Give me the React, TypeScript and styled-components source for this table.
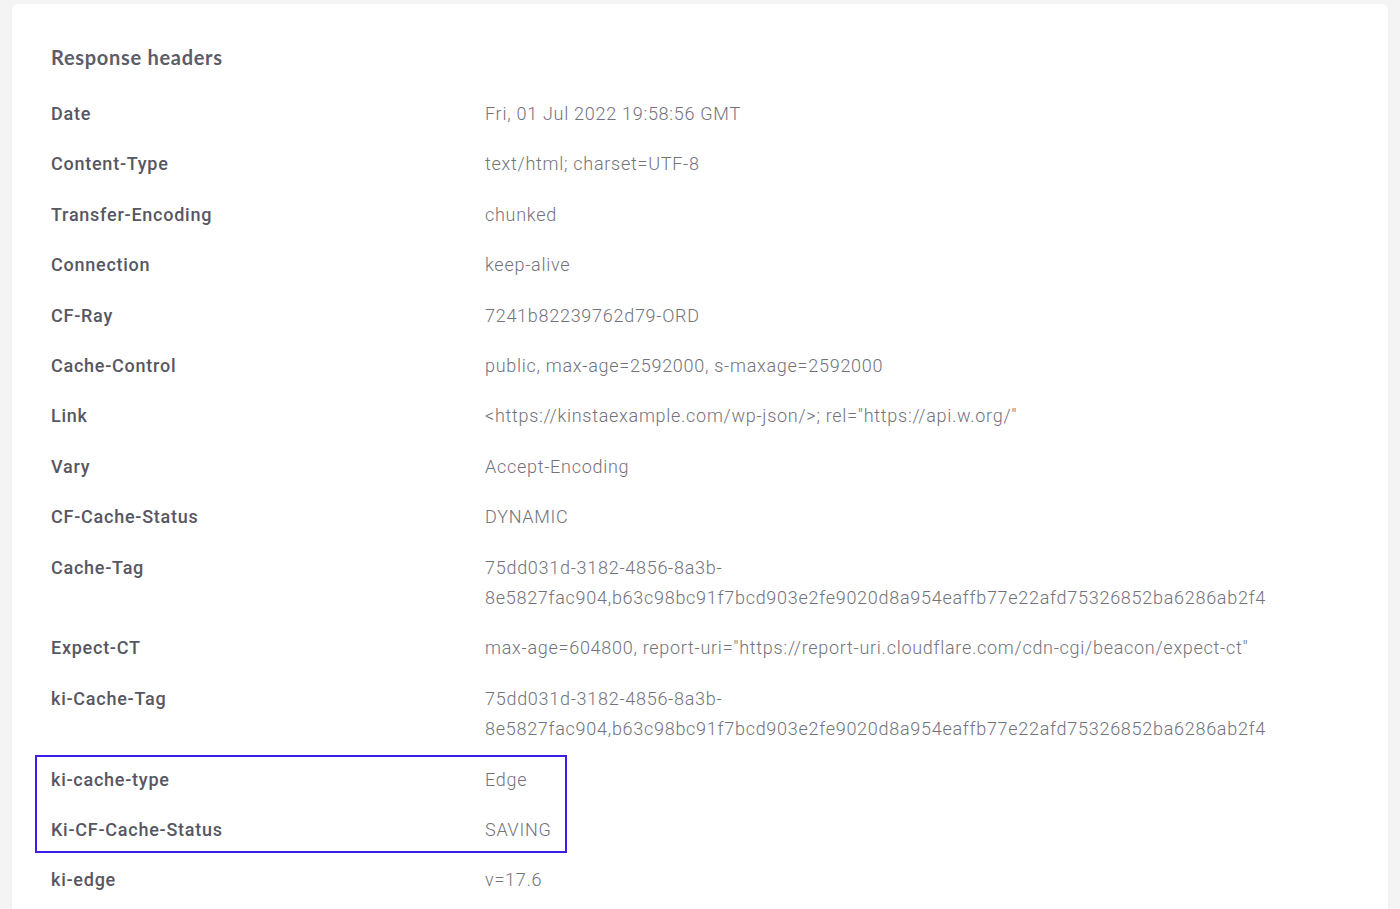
import React from "react";
import styled, { createGlobalStyle } from "styled-components";

const Global = createGlobalStyle`
  html, body { margin: 0; padding: 0; background: #f4f4f4; }
  body { padding: 4px 12px 40px 12px; font-family: Roboto, "Liberation Sans", sans-serif; }
`;

const Card = styled.section`
  background: #ffffff;
  border-radius: 5px;
  box-shadow: 0 1px 3px rgba(0, 0, 0, 0.05);
  padding: 38px 39px 20px 39px;
`;

const Title = styled.h2`
  margin: 0 0 17px 0;
  font-family: Lato, "Open Sans", sans-serif;
  font-weight: 700;
  font-size: 20px;
  line-height: 30px;
  letter-spacing: 0.7px;
  color: #5d5d69;
`;

const List = styled.dl`
  margin: 0;
  display: flex;
  flex-direction: column;
`;

const Row = styled.div`
  display: grid;
  grid-template-columns: 434px 1fr;
  padding: 10px 0;
  font-size: 18px;
  line-height: 30.4px;
`;

const Key = styled.dt`
  margin: 0;
  font-weight: 500;
  letter-spacing: 0.75px;
  color: #575763;
`;

const Value = styled.dd`
  margin: 0;
  font-weight: 300;
  letter-spacing: 0.72px;
  color: #72727c;
  word-break: break-all;
  max-width: 820px;
`;

const Highlight = styled.div`
  margin: 0 0 2px -16px;
  width: 532px;
  padding-left: 14px;
  border: 2px solid #3a1ee6;
  box-sizing: border-box;
  & > div:first-child { padding-top: 8px; }
  & > div:last-child { padding-bottom: 5px; }
`;

type H = [string, string];

const before: H[] = [
  ["Date", "Fri, 01 Jul 2022 19:58:56 GMT"],
  ["Content-Type", "text/html; charset=UTF-8"],
  ["Transfer-Encoding", "chunked"],
  ["Connection", "keep-alive"],
  ["CF-Ray", "7241b82239762d79-ORD"],
  ["Cache-Control", "public, max-age=2592000, s-maxage=2592000"],
  ["Link", "<https://kinstaexample.com/wp-json/>; rel=\"https://api.w.org/\""],
  ["Vary", "Accept-Encoding"],
  ["CF-Cache-Status", "DYNAMIC"],
  ["Cache-Tag", "75dd031d-3182-4856-8a3b-\n8e5827fac904,b63c98bc91f7bcd903e2fe9020d8a954eaffb77e22afd75326852ba6286ab2f4"],
  ["Expect-CT", "max-age=604800, report-uri=\"https://report-uri.cloudflare.com/cdn-cgi/beacon/expect-ct\""],
  ["ki-Cache-Tag", "75dd031d-3182-4856-8a3b-\n8e5827fac904,b63c98bc91f7bcd903e2fe9020d8a954eaffb77e22afd75326852ba6286ab2f4"],
];

const highlighted: H[] = [
  ["ki-cache-type", "Edge"],
  ["Ki-CF-Cache-Status", "SAVING"],
];

const after: H[] = [["ki-edge", "v=17.6"]];

const renderValue = (v: string) =>
  v.split("\n").map((line, i, arr) => (
    <React.Fragment key={i}>
      {line}
      {i < arr.length - 1 && <br />}
    </React.Fragment>
  ));

const HeaderRow = ({ h }: { h: H }) => (
  <Row>
    <Key>{h[0]}</Key>
    <Value>{renderValue(h[1])}</Value>
  </Row>
);

export default function App() {
  return (
    <>
      <Global />
      <Card>
        <Title>Response headers</Title>
        <List>
          {before.map((h) => (
            <HeaderRow key={h[0]} h={h} />
          ))}
          <Highlight>
            {highlighted.map((h) => (
              <HeaderRow key={h[0]} h={h} />
            ))}
          </Highlight>
          {after.map((h) => (
            <HeaderRow key={h[0]} h={h} />
          ))}
        </List>
      </Card>
    </>
  );
}
